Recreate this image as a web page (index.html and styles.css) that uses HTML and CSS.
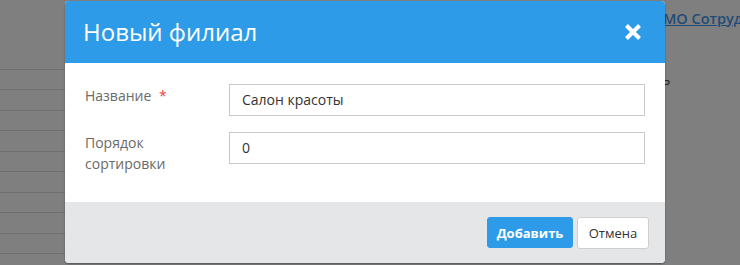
FILE: index.html
```html
<!DOCTYPE html>
<html lang="ru">
<head>
<meta charset="utf-8">
<link rel="stylesheet" href="styles.css">
</head>
<body>
<div class="page">
  <div class="list">
    <div class="row"></div><div class="row"></div><div class="row"></div><div class="row"></div><div class="row"></div>
    <div class="row"></div><div class="row"></div><div class="row"></div><div class="row"></div><div class="row"></div>
  </div>
  <div class="main">
    <a class="link">МО Сотрудн</a>
    <div class="stub">ь</div>
  </div>
</div>
<div class="overlay">
  <div class="modal">
    <div class="modal-header">
      <h1 class="modal-title">Новый филиал</h1>
      <button class="close" type="button" aria-label="Закрыть">
        <svg width="18" height="18" viewBox="0 0 18 18"><path d="M2.5 2.5 L15.5 15.5 M15.5 2.5 L2.5 15.5" stroke="#fff" stroke-width="4" stroke-linecap="butt"/></svg>
      </button>
    </div>
    <div class="modal-body">
      <div class="field">
        <label class="label">Название <span class="req">*</span></label>
        <div class="input">Салон красоты</div>
      </div>
      <div class="field">
        <label class="label">Порядок<br>сортировки</label>
        <div class="input">0</div>
      </div>
    </div>
    <div class="modal-footer">
      <button class="btn btn-primary" type="button">Добавить</button>
      <button class="btn btn-default" type="button">Отмена</button>
    </div>
  </div>
</div>
</body>
</html>
```

FILE: styles.css
```css
html, body {
  margin: 0;
  padding: 0;
  width: 740px;
  height: 265px;
  overflow: hidden;
  background: #7f7f7f;
  font-family: "Open Sans", "Noto Sans", sans-serif;
}
.page {
  display: flex;
  height: 265px;
}
.list {
  width: 200px;
  padding-top: 49px;
  flex: none;
}
.row {
  height: 19.5px;
  border-bottom: 1px solid #6e6e6e;
}
.main {
  flex: 1;
  padding-left: 463px;
  padding-top: 8px;
  white-space: nowrap;
  overflow: hidden;
}
.link {
  display: block;
  font-size: 14.5px;
  font-weight: 600;
  color: #1f4c78;
  text-decoration: underline;
  line-height: 22px;
}
.stub {
  margin-top: 41px;
  margin-left: -1px;
  font-size: 14px;
  color: #262626;
  line-height: 18px;
}
.overlay {
  position: absolute;
  left: 0;
  top: 0;
  width: 740px;
  height: 265px;
  display: flex;
  justify-content: center;
  padding-top: 1px;
  box-sizing: border-box;
}
.modal {
  width: 600px;
  height: 262px;
  margin-left: -10px;
  background: #fff;
  border-radius: 4px;
  overflow: hidden;
  box-shadow: 0 1px 2px rgba(0,0,0,0.35);
  display: flex;
  flex-direction: column;
}
.modal-header {
  height: 62px;
  background: #2e9be8;
  display: flex;
  align-items: center;
  justify-content: space-between;
  padding: 0 23px 0 18px;
  flex: none;
}
.modal-title {
  margin: 0;
  font-size: 24px;
  font-weight: 400;
  color: #fff;
  line-height: 30px;
}
.close {
  border: 0;
  background: none;
  padding: 0;
  width: 18px;
  height: 18px;
  display: flex;
}
.modal-body {
  flex: none;
  height: 139px;
  box-sizing: border-box;
  padding: 21px 20px 0 20px;
  display: flex;
  flex-direction: column;
  gap: 16px;
}
.field {
  display: flex;
  align-items: flex-start;
}
.label {
  width: 144px;
  flex: none;
  font-size: 14px;
  line-height: 22px;
  color: #6a6a6a;
  padding-top: 1px;
}
.field:nth-child(2) .label {
  line-height: 21px;
  padding-top: 0;
}
.req {
  color: #e8413e;
  margin-left: 4px;
}
.input {
  flex: 1;
  height: 32px;
  box-sizing: border-box;
  border: 1px solid #c8c8c8;
  padding: 0 12px;
  font-size: 14px;
  line-height: 30px;
  color: #333;
}
.modal-footer {
  flex: 1;
  background: #e5e6e8;
  display: flex;
  align-items: center;
  justify-content: flex-end;
  gap: 4px;
  padding: 0 16px 0 0;
}
.btn {
  font-family: "Open Sans", "Noto Sans", sans-serif;
  font-size: 13px;
  border-radius: 3px;
  cursor: pointer;
  box-sizing: border-box;
}
.btn-primary {
  width: 86px;
  height: 31px;
  background: #2e9be8;
  border: 1px solid #2e9be8;
  color: #fff;
  font-weight: 700;
}
.btn-default {
  width: 72px;
  height: 32px;
  background: #fff;
  border: 1px solid #cfcfcf;
  color: #333;
  font-weight: 400;
}
```
